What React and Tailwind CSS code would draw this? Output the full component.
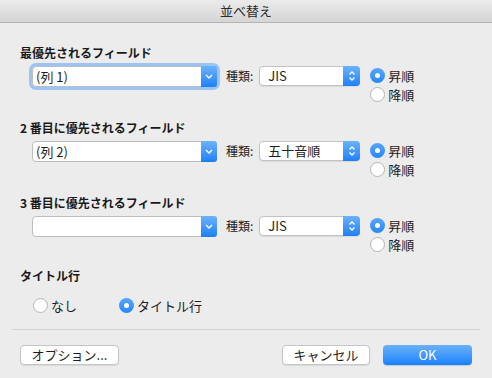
import React from 'react';

const font = { fontFamily: '"Noto Sans CJK JP", "Liberation Sans", sans-serif' };

function ComboBox({ value, focused }) {
    return (
        <div className={`flex h-[21px] w-[185px] items-stretch rounded-[4px] bg-white border border-[#bdbdbd] ${focused ? 'ring-[3px] ring-[#9cc3f5]' : ''}`}>
            <div className="flex-1 pl-[3px] text-[13px] leading-[19px] text-[#1e1e1e]">{value}</div>
            <div className="flex w-[16px] items-center justify-center rounded-r-[3px] bg-gradient-to-b from-[#6ab2fb] to-[#1b7ff9] -my-px -mr-px">
                <svg width="8" height="5" viewBox="0 0 8 5">
                    <path d="M1 1l3 3 3-3" fill="none" stroke="white" strokeWidth="1.3" />
                </svg>
            </div>
        </div>
    );
}

function PopUp({ value }) {
    return (
        <div className="flex h-[20px] w-[101px] items-stretch rounded-[4px] bg-white border border-[#c2c2c2] shadow-[0_1px_1px_rgba(0,0,0,0.08)]">
            <div className="flex-1 pl-[8px] text-[13px] leading-[18px] text-[#1e1e1e]">{value}</div>
            <div className="flex w-[17px] items-center justify-center rounded-r-[4px] bg-gradient-to-b from-[#6ab2fb] to-[#1b7ff9] -my-px -mr-px">
                <svg width="8" height="12" viewBox="0 0 8 12">
                    <path d="M1.5 4.5l2.5-2.5 2.5 2.5M1.5 7.5l2.5 2.5 2.5-2.5" fill="none" stroke="white" strokeWidth="1.3" />
                </svg>
            </div>
        </div>
    );
}

function Radio({ checked, label }) {
    return (
        <div className="flex items-center gap-[3px]">
            {checked ? (
                <div className="flex h-[15px] w-[15px] items-center justify-center rounded-full bg-gradient-to-b from-[#56a6fb] to-[#2588f9]">
                    <div className="h-[5px] w-[5px] rounded-full bg-white" />
                </div>
            ) : (
                <div className="h-[15px] w-[15px] rounded-full border border-[#b5b5b5] bg-white" />
            )}
            <span className="text-[13px] leading-[15px] text-[#1e1e1e]">{label}</span>
        </div>
    );
}

function SortSection({ title, field, kind, focused }) {
    return (
        <div className="flex flex-col">
            <div className="text-[12px] font-bold leading-[14px] text-[#1a1a1a]">{title}</div>
            <div className="mt-[6px] flex items-start pl-[12px]">
                <ComboBox value={field} focused={focused} />
                <span className="ml-[9px] mt-[2px] text-[12px] leading-[16px] text-[#222]">種類:</span>
                <div className="ml-[6px]">
                    <PopUp value={kind} />
                </div>
                <div className="ml-[10px] mt-[2px] flex flex-col gap-[4px]">
                    <Radio checked label="昇順" />
                    <Radio label="降順" />
                </div>
            </div>
        </div>
    );
}

function Button({ children, primary, className = '' }) {
    return primary ? (
        <div className={`flex h-[20px] items-center justify-center rounded-[4px] bg-gradient-to-b from-[#69b1fb] to-[#1181fd] text-[13px] text-white shadow-[0_1px_1px_rgba(0,0,0,0.15)] ${className}`}>
            {children}
        </div>
    ) : (
        <div className={`flex h-[20px] items-center justify-center rounded-[4px] border border-[#c5c5c5] bg-white text-[13px] text-[#1e1e1e] shadow-[0_1px_1px_rgba(0,0,0,0.08)] ${className}`}>
            {children}
        </div>
    );
}

export default function App() {
    return (
        <div className="h-[378px] w-[492px] overflow-hidden bg-[#ececec]" style={font}>
            {/* Title bar */}
            <div className="flex h-[23px] items-center justify-center border-b border-[#b4b4b4] bg-gradient-to-b from-[#ebebeb] to-[#d5d5d5] text-[13px] text-[#2b2b2b]">
                並べ替え
            </div>

            <div className="flex flex-col gap-[19px] px-[20px] pt-[23px]">
                <SortSection title="最優先されるフィールド" field="(列 1)" kind="JIS" focused />
                <SortSection title="2 番目に優先されるフィールド" field="(列 2)" kind="五十音順" />
                <SortSection title="3 番目に優先されるフィールド" field="" kind="JIS" />
            </div>

            <div className="px-[20px] pt-[17px]">
                <div className="text-[12px] font-bold leading-[14px] text-[#1a1a1a]">タイトル行</div>
                <div className="mt-[15px] flex items-center gap-[42px] pl-[13px]">
                    <Radio label="なし" />
                    <Radio checked label="タイトル行" />
                </div>
            </div>

            <div className="mx-[12px] mt-[16px] border-t border-[#d3d3d3]" />

            <div className="flex items-center px-[20px] pt-[15px]">
                <Button className="w-[99px]">オプション...</Button>
                <div className="flex-1" />
                <Button className="w-[88px]">キャンセル</Button>
                <Button primary className="ml-[13px] w-[89px]">OK</Button>
            </div>
        </div>
    );
}
